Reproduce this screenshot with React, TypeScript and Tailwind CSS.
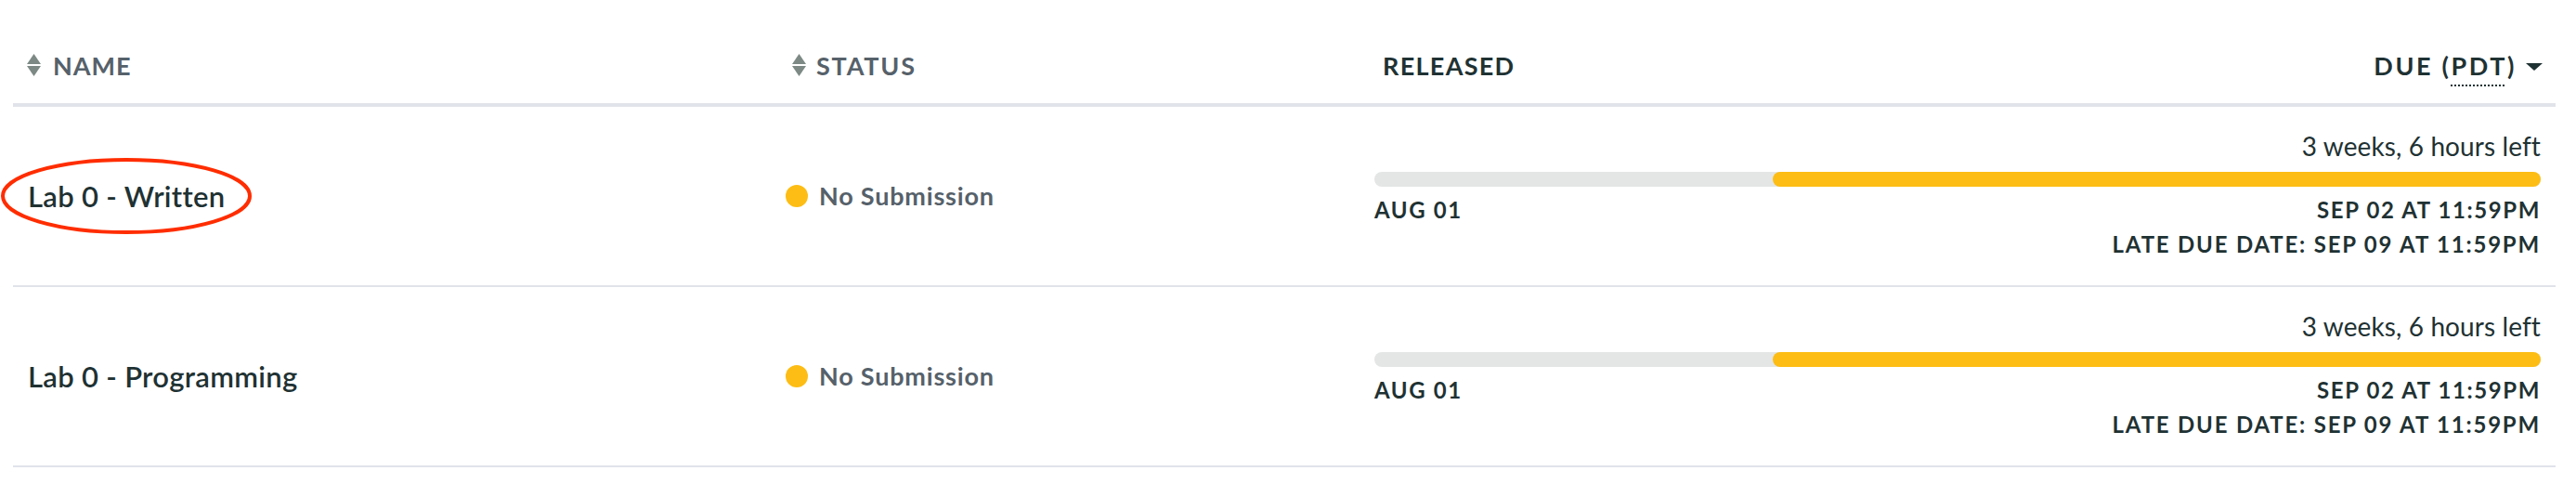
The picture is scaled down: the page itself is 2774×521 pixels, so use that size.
import React from "react";

function SortIcon() {
  return (
    <svg width="15" height="24" viewBox="0 0 15 24" className="shrink-0">
      <path d="M7.5 0 L15 11 L0 11 Z" fill="#7d8985" />
      <path d="M0 13 L15 13 L7.5 24 Z" fill="#7d8985" />
    </svg>
  );
}

function Caret() {
  return (
    <svg width="18" height="8" viewBox="0 0 18 8" className="shrink-0">
      <path d="M0 0 L18 0 L9 8 Z" fill="#1f3233" />
    </svg>
  );
}

type Row = { name: string; circled?: boolean };

const rows: Row[] = [
  { name: "Lab 0 - Written", circled: true },
  { name: "Lab 0 - Programming" },
];

function DataRow({ row }: { row: Row }) {
  return (
    <div className="grid grid-cols-[822px_628px_1fr] h-[194px] border-b-2 border-[#e1e3ea]">
      <div className="relative flex items-center pl-[16px]">
        <span className="text-[31px] leading-[36px] font-semibold tracking-[0.3px] text-[#1f3233]">
          {row.name}
        </span>
        {row.circled && (
          <svg
            className="absolute left-[-14px] top-[54px] pointer-events-none"
            width="272"
            height="84"
            viewBox="0 0 272 84"
          >
            <ellipse cx="136" cy="42" rx="133" ry="39" fill="none" stroke="#ff2d00" strokeWidth="4" />
          </svg>
        )}
      </div>
      <div className="flex items-center pl-[10px] gap-[12px]">
        <span className="w-[24px] h-[24px] rounded-full bg-[#fdbd14] shrink-0" />
        <span className="text-[27px] leading-[32px] font-bold tracking-[0.8px] text-[#56616a]">No Submission</span>
      </div>
      <div className="flex flex-col pl-[16px] pr-[16px] pt-[26px] text-[#1f3233]">
        <div className="text-right text-[28px] leading-[32px] tracking-[0.1px]">3 weeks, 6 hours left</div>
        <div className="mt-[12px] h-[16px] rounded-full bg-[#e4e6e5] flex justify-end">
          <div className="h-[16px] w-[827px] rounded-full bg-[#fdbd14]" />
        </div>
        <div className="mt-[11px] flex justify-between text-[24px] leading-[28px] font-bold tracking-[1.6px]">
          <span>AUG 01</span>
          <span>SEP 02 AT 11:59PM</span>
        </div>
        <div className="mt-[9px] text-right text-[24px] leading-[28px] font-bold tracking-[1.8px]">
          LATE DUE DATE: SEP 09 AT 11:59PM
        </div>
      </div>
    </div>
  );
}

export default function App() {
  return (
    <div className="w-[2774px] h-[521px] bg-white font-['Lato',sans-serif] pl-[14px] pr-[22px]">
      <div className="grid grid-cols-[822px_628px_1fr] h-[115px] border-b-4 border-[#e1e3ea] text-[27px] leading-[32px] font-bold">
        <div className="flex items-start pt-[55px] pl-[15px] gap-[13px] text-[#56616a]">
          <span className="mt-[3px]"><SortIcon /></span>
          <span className="tracking-[1px]">NAME</span>
        </div>
        <div className="flex items-start pt-[55px] pl-[17px] gap-[11px] text-[#56616a]">
          <span className="mt-[3px]"><SortIcon /></span>
          <span className="tracking-[1.8px]">STATUS</span>
        </div>
        <div className="flex items-start justify-between pt-[55px] pl-[25px] pr-[14px] text-[#1f3233]">
          <span className="tracking-[1.3px]">RELEASED</span>
          <span className="flex items-start gap-[10px] tracking-[2.6px]">
            <span>
              DUE (<span className="underline decoration-dotted decoration-2 underline-offset-[10px]">PDT</span>)
            </span>
            <span className="mt-[13px]"><Caret /></span>
          </span>
        </div>
      </div>
      {rows.map((r) => (
        <DataRow key={r.name} row={r} />
      ))}
    </div>
  );
}
